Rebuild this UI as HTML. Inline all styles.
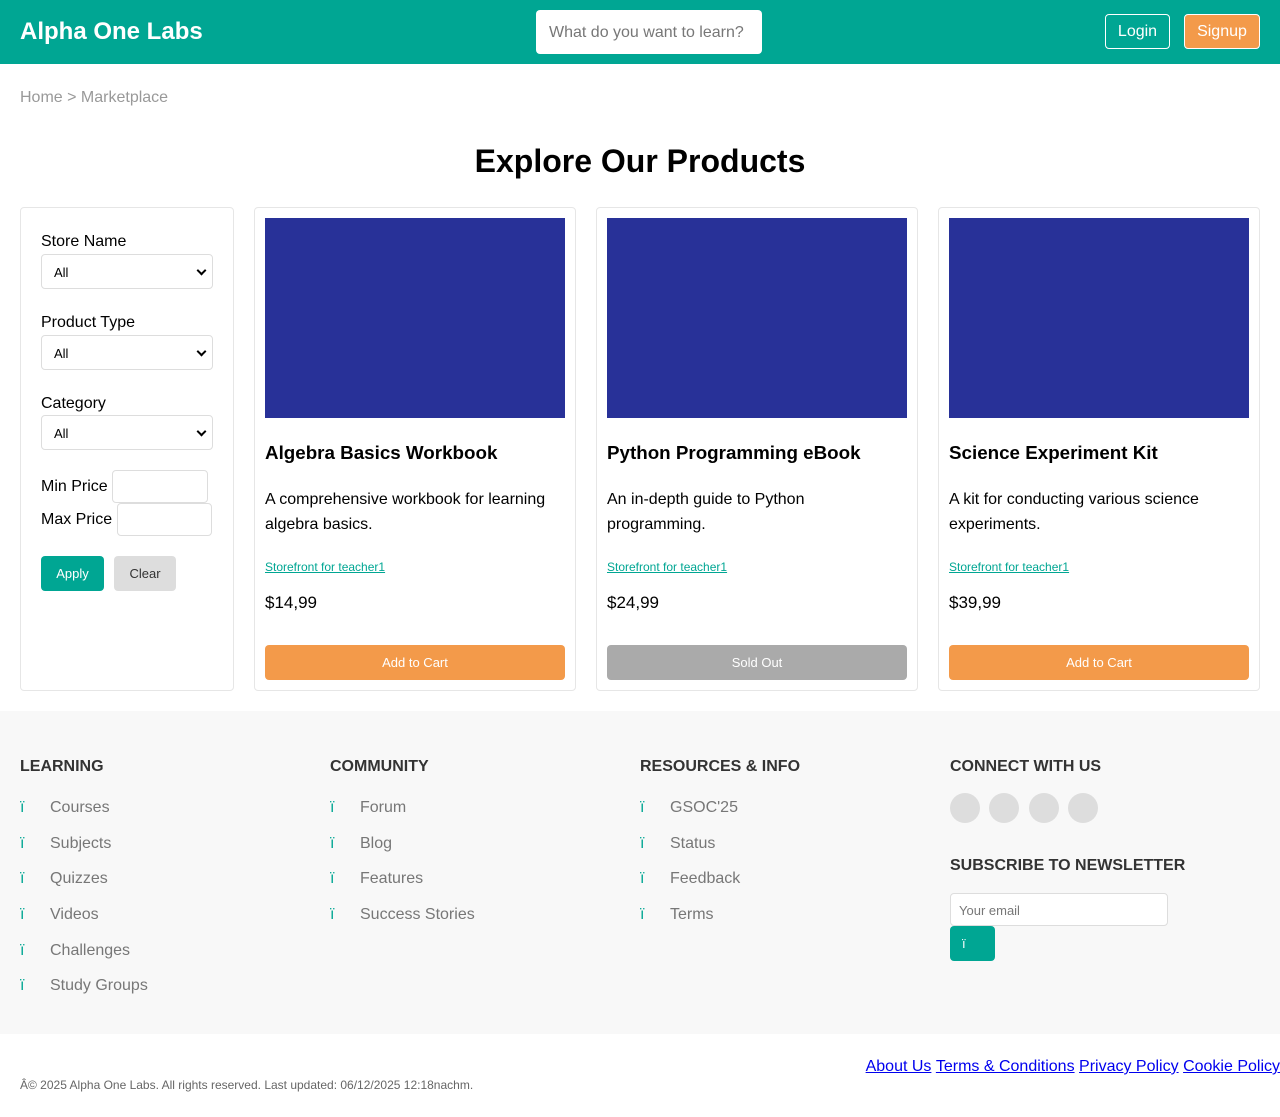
<!DOCTYPE html>
<html><head><meta charset="utf-8"><style>
*{box-sizing:border-box;margin:0;padding:0}
body{width:1280px;height:1117px;font-family:"Liberation Sans",Arial,sans-serif;background:#fff;position:relative;overflow:hidden}
.a{position:absolute}
.hdr{left:0;top:0;width:1280px;height:64px;background:#00a693}
.sel{position:absolute;left:41px;width:172px;height:35px;border:1px solid #ddd;border-radius:4px;font-size:13px;padding:10px 12px 0;background:#fff}
.sel:after{content:"";position:absolute;right:7px;top:12px;width:5px;height:5px;border-right:2px solid #000;border-bottom:2px solid #000;transform:rotate(45deg)}
.card{position:absolute;top:207px;width:322px;height:484px;border:1px solid #e6e6e6;border-radius:4px}
.card .img{position:absolute;left:10px;top:10px;width:300px;height:200px;background:#283198}
.card h3{position:absolute;left:10px;top:234px;font-size:18.8px;font-weight:bold}
.card p{position:absolute;left:10px;top:279px;width:300px;font-size:16px;line-height:25px}
.card .st{position:absolute;left:10px;top:352px;font-size:12px;color:#00a693;text-decoration:underline}
.card .pr{position:absolute;left:10px;top:385px;font-size:17px}
.card .btn{position:absolute;left:10px;top:437px;width:300px;height:35px;border-radius:4px;background:#f39a4a;color:#fff;font-size:13px;text-align:center;line-height:35px}
.fh{position:absolute;top:758px;font-size:16px;font-weight:bold;color:#333}
.fl{position:absolute;font-size:16px;color:#777}
.fl b{color:#00a693;font-weight:normal;position:absolute;left:-30px}
.c{position:absolute;top:793px;width:30px;height:30px;border-radius:50%;background:#ddd}
.ft a{color:#00e;text-decoration:underline;font-size:16px}
</style></head><body>
<div class="a hdr"></div>
<div class="a" style="left:20px;top:18px;color:#fff;font-size:24px;font-weight:bold">Alpha One Labs</div>
<div class="a" style="left:536px;top:10px;width:226px;height:44px;background:#fff;border-radius:4px;padding:14px 13px 0;font-size:16px;color:#777">What do you want to learn?</div>
<div class="a" style="left:1105px;top:14px;width:65px;height:35px;border:1px solid #fff;border-radius:4px;color:#fff;text-align:center;line-height:34px;font-size:16px">Login</div>
<div class="a" style="left:1184px;top:14px;width:76px;height:35px;border:1px solid #fff;background:#f39a4a;border-radius:4px;color:#fff;text-align:center;line-height:34px;font-size:16px">Signup</div>
<div class="a" style="left:20px;top:89px;font-size:16px;color:#999">Home &gt; Marketplace</div>
<div class="a" style="left:0;width:1280px;top:143px;text-align:center;font-size:32px;font-weight:bold">Explore Our Products</div>

<div class="a" style="left:20px;top:207px;width:214px;height:484px;border:1px solid #e6e6e6;border-radius:4px"></div>
<div class="a" style="left:41px;top:233px;font-size:16px">Store Name</div>
<div class="sel" style="top:254px">All</div>
<div class="a" style="left:41px;top:314px;font-size:16px">Product Type</div>
<div class="sel" style="top:335px">All</div>
<div class="a" style="left:41px;top:395px;font-size:16px">Category</div>
<div class="sel" style="top:415px">All</div>
<div class="a" style="left:41px;top:478px;font-size:16px">Min Price</div>
<div class="a" style="left:112px;top:470px;width:96px;height:33px;border:1px solid #ddd;border-radius:4px"></div>
<div class="a" style="left:41px;top:511px;font-size:16px">Max Price</div>
<div class="a" style="left:117px;top:503px;width:95px;height:33px;border:1px solid #ddd;border-radius:4px"></div>
<div class="a" style="left:41px;top:556px;width:63px;height:35px;background:#00a693;color:#fff;border-radius:4px;text-align:center;line-height:36px;font-size:13px">Apply</div>
<div class="a" style="left:114px;top:556px;width:62px;height:35px;background:#ddd;color:#333;border-radius:4px;text-align:center;line-height:36px;font-size:13px">Clear</div>

<div class="card" style="left:254px"><div class="img"></div><h3>Algebra Basics Workbook</h3><p>A comprehensive workbook for learning algebra basics.</p><div class="st">Storefront for teacher1</div><div class="pr">$14,99</div><div class="btn">Add to Cart</div></div>
<div class="card" style="left:596px"><div class="img"></div><h3>Python Programming eBook</h3><p>An in-depth guide to Python programming.</p><div class="st">Storefront for teacher1</div><div class="pr">$24,99</div><div class="btn" style="background:#aaa">Sold Out</div></div>
<div class="card" style="left:938px"><div class="img"></div><h3>Science Experiment Kit</h3><p>A kit for conducting various science experiments.</p><div class="st">Storefront for teacher1</div><div class="pr">$39,99</div><div class="btn">Add to Cart</div></div>

<div class="a" style="left:0;top:711px;width:1280px;height:323px;background:#f8f8f8"></div>
<div class="fh" style="left:20px">LEARNING</div>
<div class="fh" style="left:330px">COMMUNITY</div>
<div class="fh" style="left:640px">RESOURCES &amp; INFO</div>
<div class="fh" style="left:950px">CONNECT WITH US</div>
<div class="fl" style="left:50px;top:799px"><b>ï</b>Courses</div>
<div class="fl" style="left:50px;top:835px"><b>ï</b>Subjects</div>
<div class="fl" style="left:50px;top:870px"><b>ï</b>Quizzes</div>
<div class="fl" style="left:50px;top:906px"><b>ï</b>Videos</div>
<div class="fl" style="left:50px;top:942px"><b>ï</b>Challenges</div>
<div class="fl" style="left:50px;top:977px"><b>ï</b>Study Groups</div>
<div class="fl" style="left:360px;top:799px"><b>ï</b>Forum</div>
<div class="fl" style="left:360px;top:835px"><b>ï</b>Blog</div>
<div class="fl" style="left:360px;top:870px"><b>ï</b>Features</div>
<div class="fl" style="left:360px;top:906px"><b>ï</b>Success Stories</div>
<div class="fl" style="left:670px;top:799px"><b>ï</b>GSOC'25</div>
<div class="fl" style="left:670px;top:835px"><b>ï</b>Status</div>
<div class="fl" style="left:670px;top:870px"><b>ï</b>Feedback</div>
<div class="fl" style="left:670px;top:906px"><b>ï</b>Terms</div>
<div class="c" style="left:950px"></div><div class="c" style="left:989px"></div><div class="c" style="left:1029px"></div><div class="c" style="left:1068px"></div>
<div class="fh" style="left:950px;top:857px">SUBSCRIBE TO NEWSLETTER</div>
<div class="a" style="left:950px;top:893px;width:218px;height:33px;background:#fff;border:1px solid #ddd;border-radius:4px;padding:9px 8px 0;font-size:13px;color:#777">Your email</div>
<div class="a" style="left:950px;top:926px;width:45px;height:35px;background:#00a693;border-radius:4px;color:#fff;font-size:13px;padding:10px 12px 0">ï</div>
<div class="a ft" style="right:0;top:1058px"><a>About Us</a> <a>Terms &amp; Conditions</a> <a>Privacy Policy</a> <a>Cookie Policy</a></div>
<div class="a" style="left:20px;top:1078px;font-size:12px;color:#666">Â© 2025 Alpha One Labs. All rights reserved. Last updated: 06/12/2025 12:18nachm.</div>
</body></html>
